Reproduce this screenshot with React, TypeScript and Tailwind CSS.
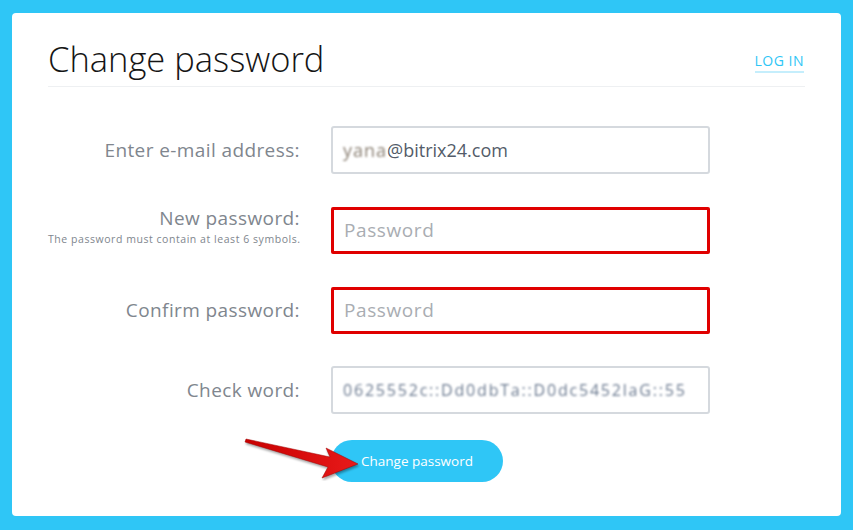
import React from 'react';

const labelFont = { fontFamily: '"Open Sans", "Liberation Sans", sans-serif' };

function Field({ label, hint, children }: { label: string; hint?: string; children: React.ReactNode }) {
  return (
    <div className="grid grid-cols-[252px_379px] gap-x-[31px] items-center h-[48px]">
      <div className={hint ? 'text-right pb-[7px]' : 'text-right'}>
        <div className="text-[19px] leading-[22px] tracking-[0.4px] text-[#80868e]">{label}</div>
        {hint && <div className="text-[10.5px] leading-[14px] tracking-[0.55px] text-[#80868e] mt-[3px] whitespace-nowrap">{hint}</div>}
      </div>
      {children}
    </div>
  );
}

export default function App() {
  return (
    <div className="w-[853px] h-[530px] bg-[#2fc6f6] pt-[13px] px-[12px] pb-[14px]" style={labelFont}>
      <div className="relative h-full bg-white rounded-[4px] px-[36px] pt-[26px]">
        <div className="flex items-end justify-between border-b border-[#eef0f2] pb-[7px]">
          <h1 className="text-[34.5px] leading-[40px] font-light text-[#151515]">Change password</h1>
          <a className="text-[14px] leading-[18px] text-[#2fc6f6] uppercase tracking-[0.5px] border-b-2 border-[#c5eefc] mb-[6px] pb-[1px] mr-[1px]">Log in</a>
        </div>

        <div className="flex flex-col gap-[32px] mt-[39px]">
          <Field label="Enter e-mail address:">
            <div className="h-[48px] border-2 border-[#d5d9de] rounded-[3px] flex items-center px-[10px] text-[18px] text-[#535c69]">
              <span className="blur-[1.2px] text-[#8a7f72] tracking-[1px]">yana</span>
              <span>@bitrix24.com</span>
            </div>
          </Field>
          <Field label="New password:" hint="The password must contain at least 6 symbols.">
            <div className="h-[47px] border-[3px] border-[#e00000] rounded-[2px] flex items-center px-[10px] text-[19px] tracking-[0.6px] text-[#a9adb2]">
              Password
            </div>
          </Field>
          <Field label="Confirm password:">
            <div className="h-[47px] border-[3px] border-[#e00000] rounded-[2px] flex items-center px-[10px] text-[19px] tracking-[0.6px] text-[#a9adb2]">
              Password
            </div>
          </Field>
          <Field label="Check word:">
            <div className="h-[48px] border-2 border-[#d5d9de] rounded-[3px] flex items-center px-[10px] text-[16px] text-[#6b7a90] overflow-hidden whitespace-nowrap">
              <span className="blur-[1.2px] tracking-[1.8px]">0625552c::Dd0dbTa::D0dc5452laG::55</span>
            </div>
          </Field>
        </div>

        <div className="ml-[283px] mt-[26px]">
          <button className="h-[42px] w-[172px] rounded-full bg-[#2fc6f6] text-white text-[13.5px]">Change password</button>
        </div>

        <svg className="absolute left-[222px] top-[423px]" width="130" height="45" viewBox="0 0 130 45">
          <defs>
            <linearGradient id="ar" x1="0" y1="0" x2="1" y2="0">
              <stop offset="0" stopColor="#c80000" />
              <stop offset="1" stopColor="#e81a1a" />
            </linearGradient>
          </defs>
          <polygon
            points="12,3 96,21 92,12 124,28 88,42 94,31 11,6"
            fill="url(#ar)"
            stroke="#a00000"
            strokeWidth="0.5"
            style={{ filter: 'drop-shadow(1px 2px 1px rgba(0,0,0,0.35))' }}
          />
        </svg>
      </div>
    </div>
  );
}
